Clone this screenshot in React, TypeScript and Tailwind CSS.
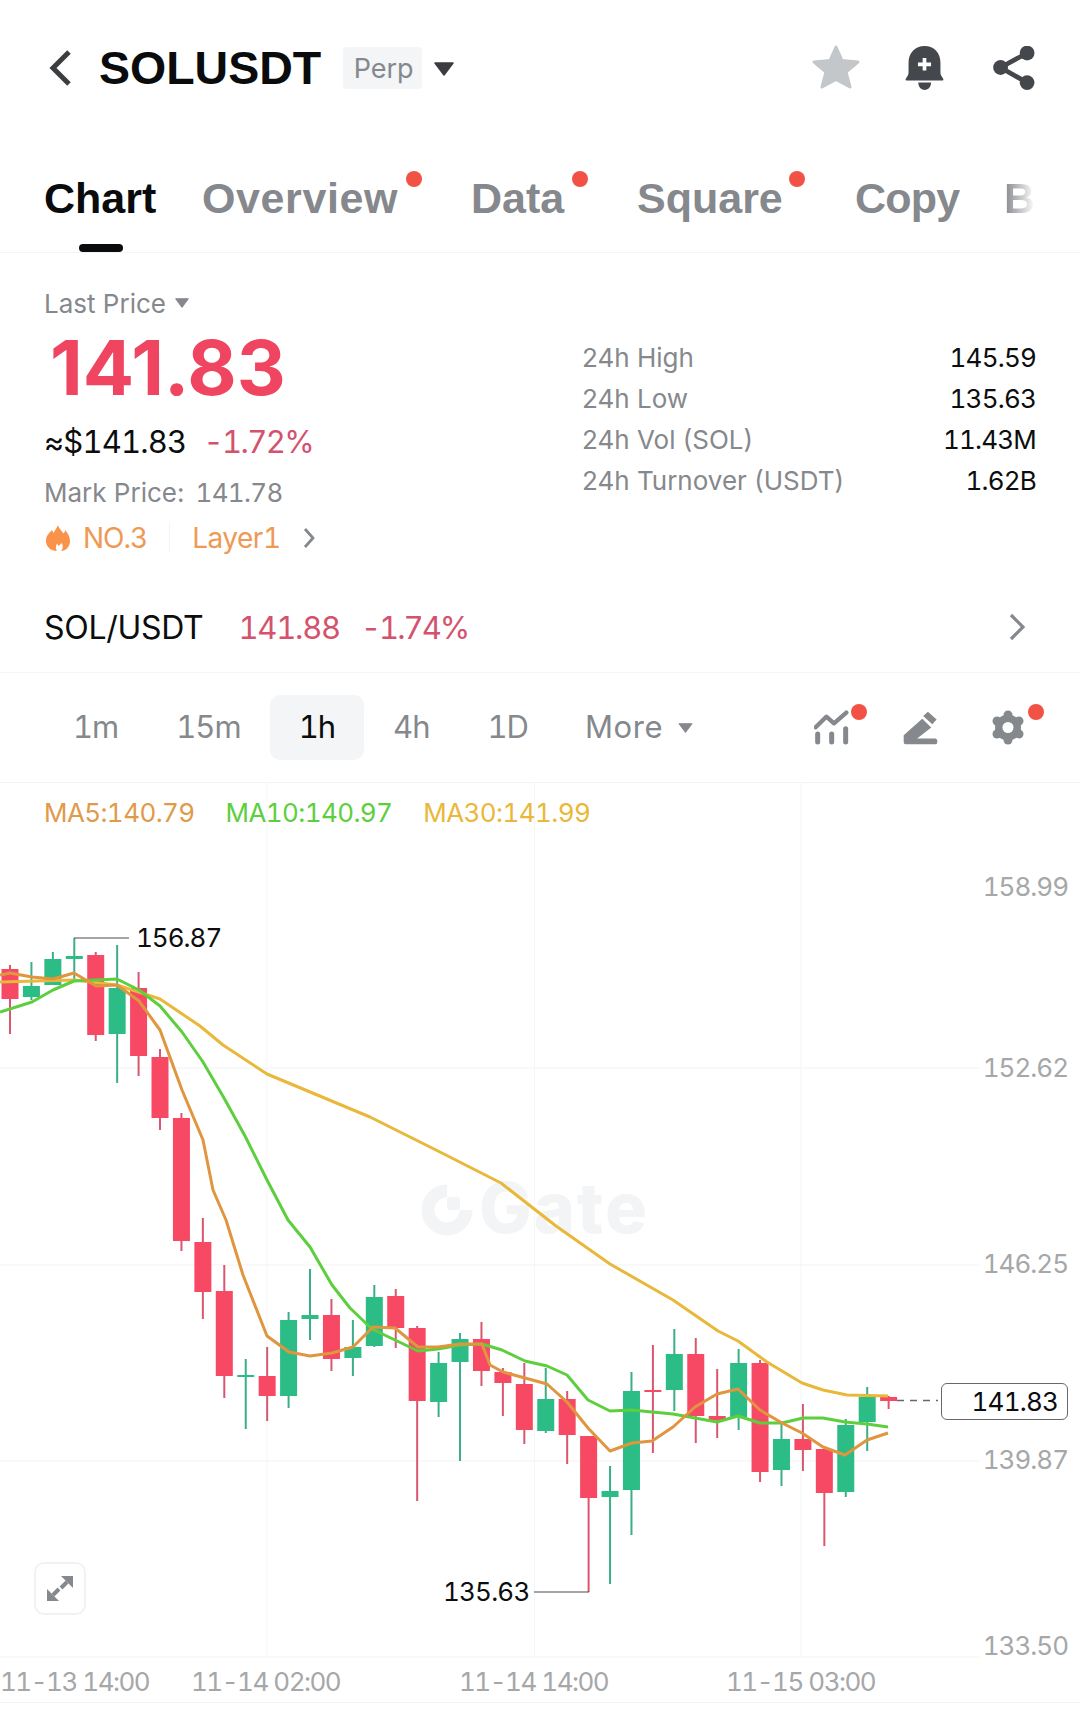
import React from "react";

const FONT = "font-['Inter','Liberation_Sans',sans-serif]";
const HEAD = "font-['Liberation_Sans',sans-serif]";

// [up, wickTop, bodyTop, bodyBottom, wickBottom]
const CANDLES: [boolean, number, number, number, number][] = [
  [false, 965, 969, 999, 1034],
  [true, 962, 986, 997, 1000],
  [true, 952, 959, 985, 985],
  [true, 938, 956, 959, 980],
  [false, 952, 955, 1035, 1041],
  [true, 945, 988, 1034, 1083],
  [false, 972, 988, 1056, 1076],
  [false, 1049, 1057, 1118, 1130],
  [false, 1113, 1118, 1241, 1251],
  [false, 1218, 1242, 1292, 1319],
  [false, 1265, 1291, 1376, 1398],
  [true, 1359, 1375, 1377, 1429],
  [false, 1347, 1376, 1396, 1421],
  [true, 1312, 1320, 1396, 1408],
  [true, 1269, 1315, 1319, 1340],
  [false, 1299, 1315, 1359, 1371],
  [true, 1320, 1347, 1358, 1376],
  [true, 1285, 1297, 1346, 1347],
  [false, 1289, 1296, 1328, 1348],
  [false, 1326, 1328, 1401, 1501],
  [true, 1352, 1363, 1402, 1417],
  [true, 1333, 1339, 1362, 1461],
  [false, 1322, 1339, 1371, 1386],
  [false, 1368, 1372, 1383, 1416],
  [false, 1363, 1384, 1430, 1444],
  [true, 1368, 1399, 1431, 1433],
  [false, 1391, 1399, 1435, 1464],
  [false, 1436, 1436, 1498, 1592],
  [true, 1466, 1491, 1497, 1584],
  [true, 1372, 1391, 1490, 1535],
  [false, 1345, 1390, 1392, 1453],
  [true, 1329, 1354, 1390, 1411],
  [false, 1338, 1354, 1416, 1443],
  [false, 1369, 1416, 1420, 1438],
  [true, 1349, 1363, 1417, 1430],
  [false, 1360, 1363, 1472, 1482],
  [true, 1422, 1439, 1470, 1486],
  [false, 1404, 1439, 1450, 1471],
  [false, 1449, 1449, 1493, 1546],
  [true, 1419, 1425, 1492, 1497],
  [true, 1387, 1397, 1422, 1451],
  [false, 1396, 1397, 1401, 1409],
];

const MA5 =
  "0,975 10,973 32,977 53,979 74,973 96,986 117,985 139,1001 160,1030 182,1090 203,1140 213,1190 226,1220 243,1275 267,1336 289,1352 310,1356 332,1353 353,1347 373,1327 395,1328 418,1347 438,1347 460,1344 482,1344 490,1365 503,1372 525,1378 547,1384 567,1402 588,1428 610,1451 632,1443 652,1441 673,1427 695,1407 717,1394 738,1389 760,1410 782,1423 802,1433 823,1447 845,1455 867,1440 888,1433";
const MA10 =
  "0,1012 32,1002 53,990 74,981 117,979 139,990 160,1006 182,1032 203,1062 224,1098 245,1136 267,1180 288,1220 310,1247 332,1285 350,1308 372,1329 395,1340 418,1351 438,1349 460,1345 482,1344 502,1350 525,1361 547,1366 567,1375 588,1400 610,1411 632,1410 652,1412 673,1414 717,1422 738,1416 760,1423 782,1423 803,1418 823,1418 845,1422 867,1424 888,1427";
const MA30 =
  "0,982 74,980 117,985 160,999 200,1026 223,1045 267,1074 370,1117 436,1150 501,1183 556,1226 610,1264 673,1300 718,1331 738,1341 767,1362 802,1383 823,1390 847,1395 888,1396";

const Y_LABELS = [
  { label: "158.99", top: "top-[86px]" },
  { label: "152.62", top: "top-[267px]" },
  { label: "146.25", top: "top-[463px]" },
  { label: "139.87", top: "top-[659px]" },
  { label: "133.50", top: "top-[845px]" },
];

function Caret({ className }: { className: string }) {
  return (
    <svg viewBox="0 0 20 14" className={className}>
      <polygon points="1,1 19,1 10,13" fill="currentColor" stroke="currentColor" strokeWidth="1.5" strokeLinejoin="round" />
    </svg>
  );
}

function Chevron({ className }: { className: string }) {
  return (
    <svg viewBox="0 0 12 22" fill="none" className={className}>
      <polyline points="2,2 10,11 2,20" stroke="currentColor" strokeWidth="2.8" />
    </svg>
  );
}

function Dot({ className }: { className: string }) {
  return <span className={`absolute h-4 w-4 rounded-full bg-[#f25246] ${className}`} />;
}

function Tab({ label, width, dot, tracking }: { label: string; width: string; dot?: string; tracking?: string }) {
  return (
    <div className={`relative shrink-0 ${width}`}>
      <span className={`text-[#85888c] ${tracking ?? ""}`}>{label}</span>
      {dot && <Dot className={`top-[-2px] ${dot}`} />}
    </div>
  );
}

function Stat({ label, value }: { label: string; value: string }) {
  return (
    <div className="flex h-[41px] items-center justify-between">
      <span className="text-[#85888c]">{label}</span>
      <span className="tabular-nums tracking-[-0.8px] text-[#0c0d0e]">{value}</span>
    </div>
  );
}

export default function App() {
  return (
    <div className={`h-[1709px] w-[1080px] overflow-hidden bg-white ${FONT}`}>
      {/* title bar */}
      <header className="flex h-[135px] items-center pl-[49px] pr-[45px]">
        <svg viewBox="0 0 22 36" fill="none" className="h-9 w-[22px] text-[#3b3d40]">
          <polyline points="20,2 4,18 20,34" stroke="currentColor" strokeWidth="5" />
        </svg>
        <h1 className={`ml-[28px] mt-[2px] text-[46.5px] font-bold leading-none text-[#0a0b0c] ${HEAD}`}>SOLUSDT</h1>
        <span className="ml-[22px] flex h-[42px] w-[79px] items-center justify-center rounded bg-[#f3f5f6] pl-[2px] pt-[3px] text-[27px] text-[#85888c]">
          Perp
        </span>
        <Caret className="ml-3 mt-[3px] h-[14px] w-5 text-[#3b3d40]" />
        <svg viewBox="0 0 48 44" className="mb-[2px] ml-auto h-[46px] w-[48px]">
          <polygon
            points="24,2 30,15.500 46,17 34,27 38,42 24,34.500 10,42 14,27 2,17 18,15.500"
            fill="#c3c7ca"
            stroke="#c3c7ca"
            strokeWidth="3"
            strokeLinejoin="round"
          />
        </svg>
        <svg viewBox="1060 137 113 131" className="ml-[45px] h-[44px] w-[39px]">
          <path
            d="M1117 137c-29 0-48 21-48 50v30c0 7-5 12-9 20 0 2 1 3 3 3h107c2 0 3-1 3-3-4-8-9-13-9-20v-30c0-29-18-50-47-50z"
            fill="#44474c"
          />
          <path d="M1098 246h38c0 13-8 22-19 22s-19-9-19-22z" fill="#44474c" />
          <path d="M1111 173h11v13h14v11h-14v13h-11v-13h-14v-11h14z" fill="#fff" />
        </svg>
        <svg viewBox="1315 137 120 131" className="ml-[49px] h-[44px] w-[42px]">
          <polyline points="1414,158 1335,201 1414,246" fill="none" stroke="#44474c" strokeWidth="14" />
          <circle cx="1414" cy="158" r="22" fill="#44474c" />
          <circle cx="1335" cy="201" r="22" fill="#44474c" />
          <circle cx="1414" cy="246" r="22" fill="#44474c" />
        </svg>
      </header>

      {/* tabs */}
      <nav className={`relative flex h-[118px] overflow-hidden border-b border-[#f3f4f5] pl-[44px] pt-[38px] text-[43px] font-bold leading-[50px] ${HEAD}`}>
        <span className="w-[158px] shrink-0 text-[#0a0b0c]">Chart</span>
        <Tab label="Overview" width="w-[269px]" dot="left-[204px]" tracking="tracking-[0.6px]" />
        <Tab label="Data" width="w-[166px]" dot="left-[101px]" />
        <Tab label="Square" width="w-[218px]" dot="left-[152px]" />
        <Tab label="Copy" width="w-[149px]" tracking="tracking-[-0.8px]" />
        <span className="bg-linear-to-r from-[#85888c] to-white bg-clip-text text-transparent">B</span>
        <span className="absolute bottom-0 left-[79px] h-2 w-[44px] rounded-sm bg-[#0a0b0c]" />
      </nav>

      {/* price summary */}
      <section className="flex h-[420px] border-b border-[#f3f4f5]">
        <div className="w-[582px] pl-[44px] pt-[32px]">
          <div className="flex h-9 items-center gap-[9px] text-[26px] text-[#85888c]">
            Last Price
            <Caret className="h-[10px] w-[14px] text-[#85888c]" />
          </div>
          <div className="ml-[6px] mt-[11px] flex h-[70px] items-center text-[76px] font-bold text-[#ef4560]">141.83</div>
          <div className="mt-[20px] flex h-10 items-center gap-[17px] text-[31px] tabular-nums">
            <span className="tracking-[-0.8px] text-[#0c0d0e]">≈$141.83</span>
            <span className="tracking-[-1.6px] text-[#d4526e]">-1.72%</span>
          </div>
          <div className="mt-[10px] flex h-10 items-center gap-[11px] text-[26px] text-[#85888c]">
            <span>Mark Price:</span>
            <span className="tabular-nums tracking-[-0.7px]">141.78</span>
          </div>
          <div className="mt-[6px] flex h-10 items-center text-[28px] text-[#ee9a56]">
            <svg viewBox="0 0 24 26" className="ml-[2px] h-[26px] w-6 text-[#f9934a]">
              <path
                fill="currentColor"
                d="M12 0c1 4 4 6 5.500 8.500 1-1 1.500-2 1.500-3.500 3 3 5 7 5 11 0 6-4.500 10-9 10 2-2 2.500-5 .5-8-1 1.500-2 2-3 3-.5-1-1-1.500-1.500-2.500-1.500 3-1.500 5.500 0 7.500-6 0-11-4-11-10 0-5 3-8 6-11 .5 1 1 2 1.500 3C9 5 11 3 12 0z"
              />
            </svg>
            <span className="ml-[13px] tabular-nums tracking-[-1px]">NO.3</span>
            <span className="ml-[22px] h-[30px] w-px bg-[#f3f4f5]" />
            <span className="ml-[22px] tabular-nums tracking-[-0.5px]">Layer1</span>
            <Chevron className="ml-[22px] h-[22px] w-3 text-[#85888c]" />
          </div>
          <div className="mt-[50px] flex h-10 items-center text-[31px] tabular-nums">
            <span className="text-[32px] tracking-[-0.3px] text-[#0c0d0e]">SOL/USDT</span>
            <span className="ml-[35px] tracking-[-1.2px] text-[#d4526e]">141.88</span>
            <span className="ml-[21px] tracking-[-2px] text-[#d4526e]">-1.74%</span>
          </div>
        </div>
        <div className="relative flex-1 pr-[44px] pt-[84px] text-[26px]">
          <Stat label="24h High" value="145.59" />
          <Stat label="24h Low" value="135.63" />
          <Stat label="24h Vol (SOL)" value="11.43M" />
          <Stat label="24h Turnover (USDT)" value="1.62B" />
          <svg viewBox="0 0 16 28" fill="none" className="absolute left-[427px] top-[360px] h-7 w-4 text-[#85888c]">
            <polyline points="2,2 14,14 2,26" stroke="currentColor" strokeWidth="3.200" />
          </svg>
        </div>
      </section>

      {/* timeframes */}
      <div className="flex h-[110px] items-center border-b border-[#f3f4f5] pl-[44px] pr-[56px] text-[31px] tabular-nums tracking-[-1px] text-[#85888c]">
        <span className="px-[29px]">1m</span>
        <span className="px-[29px]">15m</span>
        <span className="flex h-[65px] items-center rounded-[10px] bg-[#f3f5f6] px-[29px] text-[#0a0b0c]">1h</span>
        <span className="px-[29px]">4h</span>
        <span className="px-[29px]">1D</span>
        <span className="pl-[28px] tracking-[0.6px]">More</span>
        <Caret className="ml-[15px] h-[10px] w-[15px]" />
        <div className="relative ml-auto flex items-center gap-[53px]">
          <svg viewBox="285 120 105 105" className="h-[35px] w-[35px]">
            <polyline points="290,172 322,140 345,160 382,128" fill="none" stroke="#85888c" strokeWidth="13" strokeLinejoin="round" strokeLinecap="round" />
            <path d="M296 192v24M338 192v24M380 176v40" stroke="#85888c" strokeWidth="15" strokeLinecap="round" />
          </svg>
          <svg viewBox="545 120 110 107" className="h-[36px] w-[37px]">
            <path d="M550 195 605 146 632 172 590 205H644q6 0 6 8v2q0 7-6 7H556q-6 0-6-7z" fill="#85888c" />
            <path d="M608 138 622 125 648 148 635 162z" fill="#85888c" />
          </svg>
          <svg viewBox="0 0 32 35" className="h-[35px] w-8">
            <g fill="#85888c">
              <circle cx="16" cy="17.500" r="13" />
              <circle cx="16" cy="5" r="4.500" />
              <circle cx="16" cy="30" r="4.500" />
              <circle cx="5" cy="11" r="4.500" />
              <circle cx="27" cy="11" r="4.500" />
              <circle cx="5" cy="24" r="4.500" />
              <circle cx="27" cy="24" r="4.500" />
            </g>
            <circle cx="16" cy="17.500" r="5.500" fill="#fff" />
          </svg>
          <Dot className="left-[37px] top-[-6px]" />
          <Dot className="right-[-20px] top-[-6px]" />
        </div>
      </div>

      {/* chart */}
      <div className="relative h-[875px]">
        <span className="absolute left-[479px] top-[386px] text-[70px] font-extrabold leading-[78px] tracking-[2px] text-[#f3f4f5]">Gate</span>
        <svg viewBox="0 783 1080 875" className="absolute inset-0 h-[875px] w-[1080px]">
          <path d="M267 783V1658M534.500 783V1658M801 783V1658" fill="none" stroke="#f6f7f8" strokeWidth="1.200" />
          <path d="M0 1068H985M0 1265H985M0 1461H985M0 1657H985" fill="none" stroke="#f3f4f5" strokeWidth="1.200" />
          {/* watermark logo */}
          <path d="M447 1191a19 19 0 1 0 19 19" fill="none" stroke="#f3f4f5" strokeWidth="13" />
          <rect x="447" y="1197" width="13" height="13" rx="3" fill="#f3f4f5" />
          {CANDLES.map(([up, wt, bt, bb, wb], i) => {
            const x = 10 + 21.43 * i;
            return (
              <g key={i}>
                <line x1={x} x2={x} y1={wt} y2={wb} stroke={up ? "#3aaf87" : "#d9566f"} strokeWidth="2" />
                <rect x={x - 8.5} y={bt} width="17" height={bb - bt} fill={up ? "#2bbd85" : "#f74964"} />
              </g>
            );
          })}
          <polyline points={MA30} fill="none" stroke="#e9b83a" strokeWidth="3" strokeLinejoin="round" />
          <polyline points={MA10} fill="none" stroke="#5dcf3e" strokeWidth="3" strokeLinejoin="round" />
          <polyline points={MA5} fill="none" stroke="#e0953f" strokeWidth="3" strokeLinejoin="round" />
          <path d="M74 938H129M534 1592H589" fill="none" stroke="#4a4c50" strokeWidth="1.200" />
          <path d="M897 1400.500H938" fill="none" stroke="#66686c" strokeWidth="1.500" strokeDasharray="7 6" />
        </svg>

        <div className="relative flex h-[58px] items-center gap-[31px] pl-[44px] text-[26px] tabular-nums tracking-[-0.6px]">
          <span className="text-[#df9a4a]">MA5:140.79</span>
          <span className="text-[#5dcf3e]">MA10:140.97</span>
          <span className="text-[#e9b83a]">MA30:141.99</span>
        </div>

        {Y_LABELS.map((y) => (
          <span key={y.label} className={`absolute right-[12px] bg-white pl-1 text-[26px] leading-9 tabular-nums tracking-[-1px] text-[#a5a7a9] ${y.top}`}>
            {y.label}
          </span>
        ))}

        <span className="absolute left-[136px] top-[137px] text-[26px] leading-9 tabular-nums tracking-[-1px] text-[#0c0d0e]">156.87</span>
        <span className="absolute left-[443px] top-[791px] text-[26px] leading-9 tabular-nums tracking-[-0.8px] text-[#0c0d0e]">135.63</span>

        <div className="absolute left-[941px] top-[600px] flex h-[37px] w-[127px] items-center justify-end rounded-md border border-[#66686c] bg-white pr-[9px] text-[26px] tabular-nums tracking-[-0.8px] text-[#0c0d0e]">
          141.83
        </div>

        <div className="absolute left-[34px] top-[779px] flex h-[53px] w-[52px] items-center justify-center rounded-[10px] border-2 border-[#f1f2f3] bg-white">
          <svg viewBox="0 0 26 25" className="h-[25px] w-[26px]">
            <g fill="#85888c">
              <polygon points="26,0 26,12 14,0" />
              <polygon points="0,25 0,13 12,25" />
            </g>
            <path d="M20 6 14 12M6 19 12 13" stroke="#85888c" strokeWidth="4" />
          </svg>
        </div>
      </div>

      {/* time axis */}
      <div className="flex h-[45px] items-center whitespace-nowrap border-b border-[#f3f4f5] pt-[2px] text-[26px] tabular-nums tracking-[-1.5px] text-[#a5a7a9]">
        <span className="w-[191px] shrink-0">11-13 14:00</span>
        <span className="w-[268px] shrink-0">11-14 02:00</span>
        <span className="w-[267px] shrink-0">11-14 14:00</span>
        <span>11-15 03:00</span>
      </div>
    </div>
  );
}
